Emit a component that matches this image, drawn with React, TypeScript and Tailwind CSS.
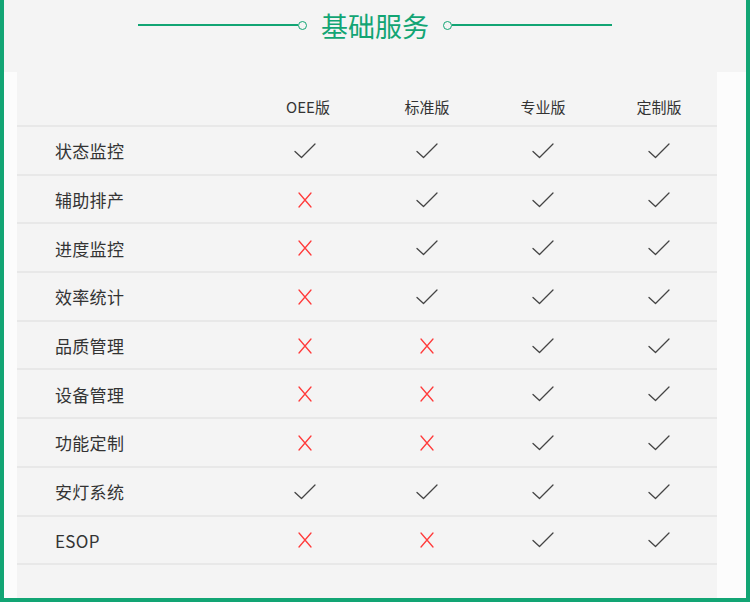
import React from "react";

const Check = () => (
  <svg width="24" height="18" viewBox="0 0 24 18" fill="none">
    <path d="M2 9.5 L8.5 15.5 L22 2" stroke="#444" strokeWidth="1.3" strokeLinecap="round" strokeLinejoin="round" />
  </svg>
);

const Cross = () => (
  <svg width="16" height="16" viewBox="0 0 16 16" fill="none">
    <path d="M2 1 L14 15 M14 1 L2 15" stroke="#ff3a3a" strokeWidth="1.3" strokeLinecap="round" />
  </svg>
);

const rows: [string, boolean[]][] = [
  ["状态监控", [true, true, true, true]],
  ["辅助排产", [false, true, true, true]],
  ["进度监控", [false, true, true, true]],
  ["效率统计", [false, true, true, true]],
  ["品质管理", [false, false, true, true]],
  ["设备管理", [false, false, true, true]],
  ["功能定制", [false, false, true, true]],
  ["安灯系统", [true, true, true, true]],
  ["ESOP", [false, false, true, true]],
];

const cols = ["OEE版", "标准版", "专业版", "定制版"];

export default function App() {
  return (
    <div
      className="w-[750px] h-[602px] bg-[#fcfcfc] border-l-4 border-r-4 border-b-4 border-[#12a574] flex flex-col overflow-hidden"
      style={{ fontFamily: "'Noto Sans CJK SC', 'Noto Sans', sans-serif" }}
    >
      <div className="h-[72px] shrink-0 bg-[#f4f4f4] flex justify-center pt-[4px]">
        <div className="flex items-center h-[42px]">
          <div className="w-[160px] h-[1.5px] bg-[#12a574]" />
          <div className="w-[9px] h-[9px] rounded-full border-[1.5px] border-[#12a574]" />
          <div className="mx-[14px] text-[27px] leading-none text-[#12a574]">基础服务</div>
          <div className="w-[9px] h-[9px] rounded-full border-[1.5px] border-[#12a574]" />
          <div className="w-[160px] h-[1.5px] bg-[#12a574]" />
        </div>
      </div>
      <div className="flex flex-1">
        <div className="ml-[13px] w-[700px] bg-[#f4f4f4] flex flex-col">
          <div className="grid grid-cols-[230px_122px_116px_116px_116px] h-[55px] shrink-0 border-b-2 border-[#e8e8e8] items-end pb-[11px]">
            <div />
            {cols.map((c) => (
              <div key={c} className="text-center text-[15px] text-[#333] leading-none">
                {c}
              </div>
            ))}
          </div>
          {rows.map(([label, vals]) => (
            <div
              key={label}
              className="grid grid-cols-[230px_122px_116px_116px_116px] h-[48.7px] shrink-0 border-b-2 border-[#e8e8e8] items-center pt-[1px]"
            >
              <div className="pl-[38px] text-[17px] text-[#333] leading-none tracking-[0.3px]">{label}</div>
              {vals.map((v, i) => (
                <div key={i} className={"flex justify-center " + (i === 0 ? "pr-[6px]" : "")}>
                  {v ? <Check /> : <Cross />}
                </div>
              ))}
            </div>
          ))}
        </div>
      </div>
    </div>
  );
}
